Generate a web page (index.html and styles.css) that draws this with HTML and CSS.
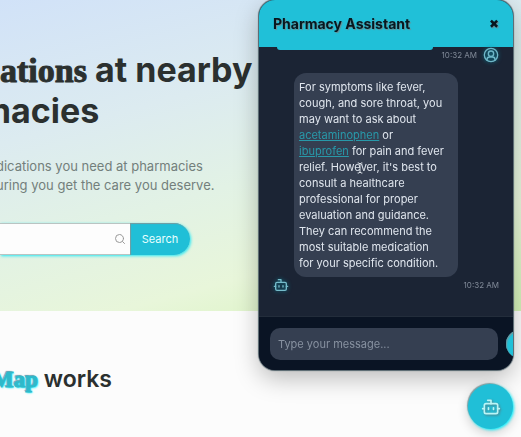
FILE: index.html
```html
<!DOCTYPE html>
<html lang="en">
<head>
<meta charset="utf-8">
<meta name="viewport" content="width=device-width, initial-scale=1">
<title>Pharmacy Assistant</title>
<link rel="stylesheet" href="styles.css">
</head>
<body>
<svg class="sprite" aria-hidden="true">
  <symbol id="bot" viewBox="0 0 24 24">
    <path d="M12 8V4H8"/><rect x="4" y="8" width="16" height="12" rx="2"/><path d="M2 14h2M20 14h2M15 13v2M9 13v2"/>
  </symbol>
</svg>
<main>
  <section class="hero">
    <h1><span class="fancy">ations</span> at nearby<span class="second">macies</span></h1>
    <p>dications you need at pharmacies<br>uring you get the care you deserve.</p>
    <form class="search">
      <label class="field">
        <input type="text" aria-label="Search medications">
        <svg class="glass" viewBox="0 0 24 24"><circle cx="11" cy="11" r="8"/><path d="m21 21-4-4"/></svg>
      </label>
      <button type="button">Search</button>
    </form>
  </section>
  <section class="how">
    <h2><span class="brand">Map</span> works</h2>
  </section>
</main>

<aside class="chat">
  <header>
    <h3>Pharmacy Assistant</h3>
    <button class="close" type="button" aria-label="Close">✖</button>
  </header>
  <div class="messages">
    <div class="mine"></div>
    <div class="meta sent">
      <time>10:32 AM</time>
      <svg class="person" viewBox="0 0 24 24"><circle cx="12" cy="12" r="10"/><circle cx="12" cy="10" r="4"/><path d="M6 20v-1a4 4 0 0 1 4-4h4a4 4 0 0 1 4 4v1"/></svg>
    </div>
    <p class="reply">For symptoms like fever,<br>cough, and sore throat, you<br>may want to ask about<br><a href="#">acetaminophen</a> or<br><a href="#">ibuprofen</a> for pain and fever<br>relief. How<span class="pointed">e<svg class="cursor" viewBox="0 0 6 12"><path d="M1 1h1l1 1 1-1h1M3 2v8M1 11h1l1-1 1 1h1"/></svg></span>ver, it's best to<br>consult a healthcare<br>professional for proper<br>evaluation and guidance.<br>They can recommend the<br>most suitable medication<br>for your specific condition.</p>
    <div class="meta received">
      <svg class="bot"><use href="#bot"/></svg>
      <time>10:32 AM</time>
    </div>
  </div>
  <form class="composer">
    <input type="text" placeholder="Type your message..." aria-label="Message">
    <button type="button" aria-label="Send"></button>
  </form>
</aside>
<button class="launcher" type="button" aria-label="Open assistant"><svg><use href="#bot"/></svg></button>
</body>
</html>
```
FILE: styles.css
```css
* { box-sizing: border-box; }
body {
  margin: 0;
  min-height: 100vh;
  overflow: hidden;
  background: #fcfcfc;
  color: #2b302f;
  font-family: Inter, sans-serif;
}
h1, h2, h3, p { margin: 0; }
button, input { font: inherit; border: 0; }
button { padding: 0; color: inherit; cursor: pointer; }
svg { fill: none; stroke: currentColor; stroke-width: 2; stroke-linecap: round; stroke-linejoin: round; }
.sprite { position: absolute; width: 0; height: 0; }

.hero {
  padding: 50px 0 56px;
  background: linear-gradient(165deg, #d1e2f8 0%, #dcebf0 32%, #e2f2e5 55%, #e8f6da 76%, #d4f2b7 100%);
}
.hero h1 {
  font-size: 34px;
  line-height: 40px;
  font-weight: 700;
  white-space: nowrap;
}
.second { display: block; margin-left: -20px; }
.fancy, .brand { font-family: "Liberation Serif", serif; font-weight: 700; -webkit-text-stroke: 1px currentColor; }
.hero p {
  margin-top: 26px;
  margin-left: -4px;
  font-size: 13px;
  line-height: 19px;
  color: #737f7c;
  white-space: nowrap;
}
.search { display: flex; width: 190px; height: 32px; margin-top: 28px; border-radius: 0 16px 16px 0; box-shadow: 1px 1px 3px #28e8f5; }
.field { display: flex; flex: 1; align-items: center; min-width: 0; padding-right: 4px; background: #fdfdfd; border-top: 1px solid #b9c4c2; border-bottom: 1px solid #b9c4c2; }
.field input { flex: 1; min-width: 0; background: transparent; outline: 0; }
.glass { width: 12px; height: 12px; color: #999; }
.search button {
  width: 60px;
  border-radius: 0 16px 16px 0;
  background: #20bfd7;
  color: #e8ffff;
  font-size: 11px;
  box-shadow: inset 1px 1px 1px #789ca0;
}
.how { padding: 53px 0; }
.how h2 { margin-left: -8px; font-size: 23px; line-height: 30px; font-weight: 600; white-space: nowrap; }
.brand { color: #2fb9ca; text-shadow: 1px 1px 2px #00f0ff, -1px -1px 1px #889; }

.chat {
  position: fixed;
  top: 0;
  right: 8px;
  width: 254px;
  overflow: hidden;
  border-radius: 16px;
  background: #1b2434;
  color: #e0e6ee;
  box-shadow: 0 0 1px 1px #53636b, 0 8px 24px #0004;
}
.chat header {
  display: flex;
  align-items: center;
  justify-content: space-between;
  height: 47px;
  padding: 0 14px;
  background: #20c0d8;
  color: #07171f;
}
.chat h3 { font-size: 14px; line-height: 20px; font-weight: 700; text-shadow: 1px 1px 1px #688f96; }
.close { background: none; font-size: 12px; text-shadow: 1px 1px 1px #688f96; }
.messages { display: flex; flex-direction: column; height: 269px; }
.mine { width: 156px; height: 3px; margin-left: 18px; border-radius: 0 0 8px 8px; background: #20c0d8; }
.meta { display: flex; align-items: center; height: 16px; padding: 0 14px; color: #818a98; font-size: 8px; }
.sent { justify-content: flex-end; gap: 6px; margin-top: -3px; }
.person { width: 16px; height: 16px; color: #6fb7c8; filter: drop-shadow(0 0 2px #087d93); }
.reply {
  width: 164px;
  margin: 10px 0 0 35px;
  padding: 6px 5px;
  border-radius: 12px;
  background: #353f51;
  font-size: 11px;
  line-height: 16px;
  white-space: nowrap;
}
.reply a { color: #2899aa; }
.pointed { position: relative; }
.cursor { position: absolute; top: 2px; right: -2px; width: 6px; height: 12px; stroke-width: 1; color: #dde3e9; }
.received { justify-content: space-between; }
.bot { width: 16px; height: 16px; color: #75bccb; filter: drop-shadow(0 0 2px #087d93); }
.composer { display: flex; align-items: center; gap: 8px; height: 54px; padding: 0 0 0 11px; background: #0a1424; border-top: 1px solid #232d3b; }
.composer input {
  flex: 0 0 228px;
  min-width: 0;
  height: 32px;
  padding: 0 8px;
  border-radius: 10px;
  background: #353f51;
  color: #e0e6ee;
  font-size: 11px;
}
.composer input::placeholder { color: #8791a0; opacity: 1; }
.composer button { flex: 0 0 28px; height: 28px; border-radius: 50%; background: #20c0d8; box-shadow: inset 1px 1px 1px #6f969d; }
.launcher {
  position: fixed;
  right: 8px;
  bottom: 8px;
  display: grid;
  place-items: center;
  width: 45px;
  height: 45px;
  border-radius: 50%;
  background: #20bfd7;
  color: #baf5f6;
  box-shadow: 1px 1px 3px #00f0ff, -1px -1px 1px #8a9598, 0 4px 12px #0003;
}
.launcher svg { width: 20px; height: 20px; filter: drop-shadow(1px 1px 1px #557f88); }
```
